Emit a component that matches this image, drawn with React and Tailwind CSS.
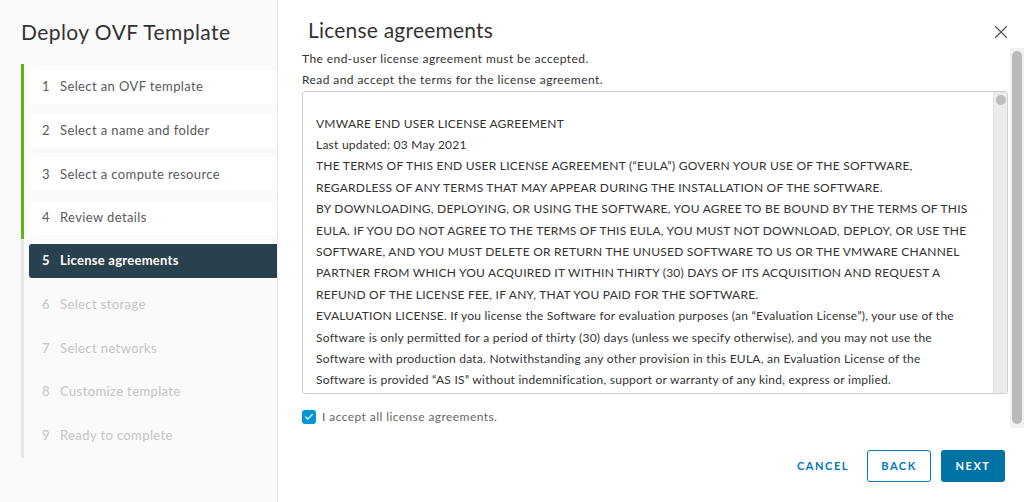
import { X, Check } from 'lucide-react';

const STEPS = [
  { n: 1, label: 'Select an OVF template', state: 'done' },
  { n: 2, label: 'Select a name and folder', state: 'done' },
  { n: 3, label: 'Select a compute resource', state: 'done' },
  { n: 4, label: 'Review details', state: 'done' },
  { n: 5, label: 'License agreements', state: 'current' },
  { n: 6, label: 'Select storage', state: 'todo' },
  { n: 7, label: 'Select networks', state: 'todo' },
  { n: 8, label: 'Customize template', state: 'todo' },
  { n: 9, label: 'Ready to complete', state: 'todo' },
];

const EULA_LINES = [
  'VMWARE END USER LICENSE AGREEMENT',
  'Last updated: 03 May 2021',
  'THE TERMS OF THIS END USER LICENSE AGREEMENT (\u201cEULA\u201d) GOVERN YOUR USE OF THE SOFTWARE,',
  'REGARDLESS OF ANY TERMS THAT MAY APPEAR DURING THE INSTALLATION OF THE SOFTWARE.',
  'BY DOWNLOADING, DEPLOYING, OR USING THE SOFTWARE, YOU AGREE TO BE BOUND BY THE TERMS OF THIS',
  'EULA. IF YOU DO NOT AGREE TO THE TERMS OF THIS EULA, YOU MUST NOT DOWNLOAD, DEPLOY, OR USE THE',
  'SOFTWARE, AND YOU MUST DELETE OR RETURN THE UNUSED SOFTWARE TO US OR THE VMWARE CHANNEL',
  'PARTNER FROM WHICH YOU ACQUIRED IT WITHIN THIRTY (30) DAYS OF ITS ACQUISITION AND REQUEST A',
  'REFUND OF THE LICENSE FEE, IF ANY, THAT YOU PAID FOR THE SOFTWARE.',
  'EVALUATION LICENSE. If you license the Software for evaluation purposes (an \u201cEvaluation License\u201d), your use of the',
  'Software is only permitted for a period of thirty (30) days (unless we specify otherwise), and you may not use the',
  'Software with production data. Notwithstanding any other provision in this EULA, an Evaluation License of the',
  'Software is provided \u201cAS IS\u201d without indemnification, support or warranty of any kind, express or implied.',
];

const StepItem = ({ step }) => {
  if (step.state === 'current') {
    return (
      <div className="ml-[5px] h-[34px] flex items-center rounded-l-[3px] bg-[#29404d] text-white font-bold text-[13px] tracking-[0.02em]">
        <span className="w-[31px] pl-[13px]">{step.n}</span>
        <span>{step.label}</span>
      </div>
    );
  }
  const done = step.state === 'done';
  return (
    <div
      className={
        done
          ? 'ml-[5px] h-[34px] flex items-center rounded-l-[3px] bg-white text-[#5a5a5a] text-[13px] tracking-[0.03em]'
          : 'ml-[5px] h-[34px] flex items-center text-[#c4c4c4] text-[13px] tracking-[0.03em]'
      }
    >
      <span className="w-[31px] pl-[13px]">{step.n}</span>
      <span>{step.label}</span>
    </div>
  );
};

export default function App() {
  const done = STEPS.filter(s => s.state === 'done');
  const rest = STEPS.filter(s => s.state !== 'done');

  return (
    <div className="w-[1024px] h-[502px] flex overflow-hidden bg-white font-['Lato',sans-serif] text-[#333]">
      {/* ── Wizard steps ── */}
      <aside className="w-[278px] shrink-0 bg-[#fafafa] border-r border-[#ececec] pl-[21px]">
        <h1 className="mt-[18px] h-[28px] leading-[28px] text-[21px] text-[#333] tracking-[0.02em]">Deploy OVF Template</h1>
        <div className="mt-[18px]">
          <div className="border-l-[3px] border-[#60b515] pt-[6px] pb-[4px] flex flex-col gap-[9.7px]">
            {done.map(s => <StepItem key={s.n} step={s} />)}
          </div>
          <div className="border-l-[3px] border-[#e8e8e8] pt-[5px] pb-[5px] flex flex-col gap-[9.7px]">
            {rest.map(s => <StepItem key={s.n} step={s} />)}
          </div>
        </div>
      </aside>

      {/* ── Page content ── */}
      <main className="flex-1 flex flex-col">
        <div className="h-[48px] flex items-start justify-between pl-[30px] pr-[12px]">
          <h2 className="mt-[16px] h-[28px] leading-[28px] text-[21px] text-[#333] tracking-[0.01em]">License agreements</h2>
          <button className="mt-[21px] text-[#555]">
            <X size={22} strokeWidth={1.3} />
          </button>
        </div>

        <div className="h-[380px] flex">
          <div className="flex-1 pl-[24px] pr-[2px]">
            <p className="h-[21px] leading-[21px] text-[12px] text-[#333] tracking-[0.035em]">The end-user license agreement must be accepted.</p>
            <p className="h-[21px] leading-[21px] text-[12px] text-[#333] tracking-[0.035em]">Read and accept the terms for the license agreement.</p>

            <div className="mt-[0.5px] h-[303px] flex border border-[#d0d0d0] rounded-[3px] overflow-hidden">
              <div className="flex-1 overflow-hidden pl-[13px] pt-[21px] text-[12px] leading-[21.4px] tracking-[0.02em] text-[#333]">
                {EULA_LINES.map((line, i) => (
                  <div key={i} className="whitespace-nowrap">{line}</div>
                ))}
              </div>
              <div className="w-[14px] bg-[#ececec] border-l border-[#e2e2e2] pt-[3px] flex justify-center">
                <div className="w-[10px] h-[10px] rounded-full bg-[#bdbdbd]" />
              </div>
            </div>

            <label className="mt-[14px] flex items-center gap-[6px] text-[12px] text-[#666] tracking-[0.035em]">
              <span className="w-[14px] h-[14px] rounded-[3px] bg-[#0095d3] flex items-center justify-center text-white">
                <Check size={10} strokeWidth={3} />
              </span>
              I accept all license agreements.
            </label>
          </div>

          {/* outer scrollbar */}
          <div className="w-[14px] bg-[#f1f1f1] flex justify-center pt-[3px] pb-[4px]">
            <div className="w-[10px] h-full rounded-full bg-[#bababa]" />
          </div>
        </div>

        <div className="flex justify-end items-start gap-[10px] pt-[22px] pr-[19px]">
          <button className="h-[32px] px-[8px] text-[11px] font-bold tracking-[0.14em] text-[#0079b8]">CANCEL</button>
          <button className="h-[32px] w-[64px] rounded-[3px] border border-[#0079b8] text-[11px] font-bold tracking-[0.14em] text-[#0079b8]">BACK</button>
          <button className="h-[32px] w-[64px] rounded-[3px] bg-[#0072a3] text-[11px] font-bold tracking-[0.14em] text-white">NEXT</button>
        </div>
      </main>
    </div>
  );
}
